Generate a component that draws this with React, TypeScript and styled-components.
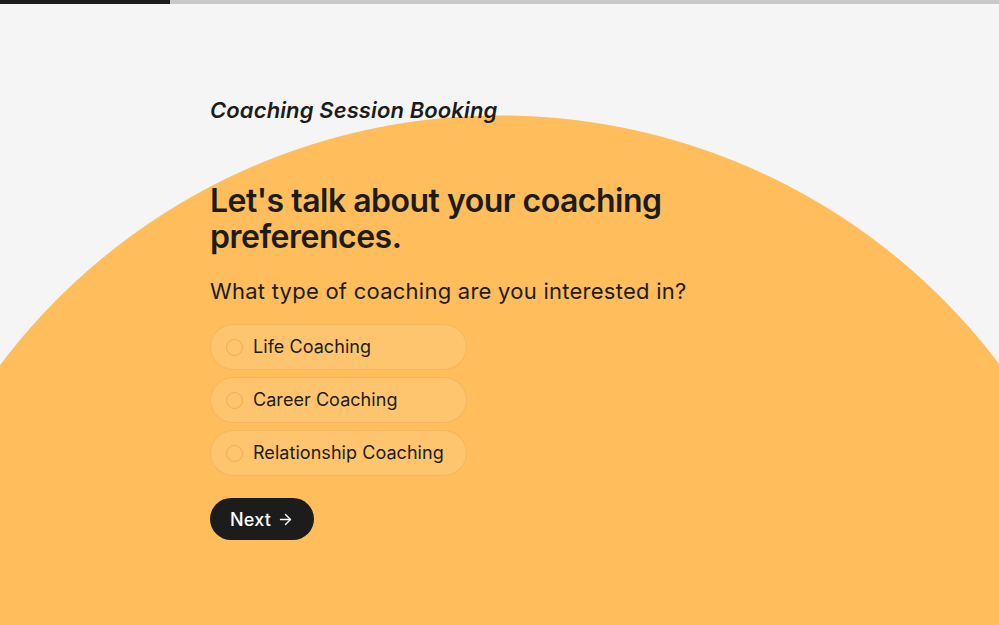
import React, { useState } from 'react';
import styled, { createGlobalStyle } from 'styled-components';

const GlobalStyle = createGlobalStyle`
  html, body {
    margin: 0;
    padding: 0;
  }
  body {
    font-family: Inter, "Noto Sans", sans-serif;
    color: #1c1c1c;
    -webkit-font-smoothing: antialiased;
  }
  * {
    box-sizing: border-box;
  }
`;

const Page = styled.div`
  min-height: 625px;
  height: 100vh;
  overflow: hidden;
  background: radial-gradient(
    circle 626px at 500px 741px,
    #ffbd5b 625px,
    #f5f5f5 626px
  );
`;

const Progress = styled.div`
  height: 4px;
  background: #c8c8c8;
`;

const ProgressFill = styled.div<{ $pct: number }>`
  height: 100%;
  width: ${(p) => p.$pct}%;
  background: #1c1c1c;
`;

const Content = styled.main`
  display: flex;
  flex-direction: column;
  align-items: flex-start;
  padding: 92px 0 0 210px;
`;

const FormTitle = styled.div`
  font-size: 22px;
  font-style: italic;
  font-weight: 600;
  line-height: 28px;
  letter-spacing: 0.12px;
  margin-bottom: 59px;
`;

const Heading = styled.h1`
  margin: 0 0 22px;
  max-width: 480px;
  font-size: 32px;
  font-weight: 600;
  line-height: 36px;
  letter-spacing: -0.5px;
`;

const Question = styled.p`
  margin: 0 0 19px;
  font-size: 22px;
  font-weight: 400;
  line-height: 28px;
  letter-spacing: 0.25px;
`;

const Options = styled.div`
  display: flex;
  flex-direction: column;
  gap: 7px;
  margin-bottom: 22px;
`;

const Option = styled.label<{ $active: boolean }>`
  display: flex;
  align-items: center;
  gap: 10px;
  width: 257px;
  height: 46px;
  padding: 0 15px;
  border-radius: 23px;
  border: 1px solid rgba(200, 130, 20, 0.22);
  background: ${(p) => (p.$active ? '#ffd08a' : 'rgba(255, 255, 255, 0.12)')};
  font-size: 18px;
  line-height: 24px;
  letter-spacing: 0.05px;
  cursor: pointer;
`;

const Radio = styled.span<{ $active: boolean }>`
  width: 17px;
  height: 17px;
  border-radius: 50%;
  border: 1px solid rgba(180, 120, 20, 0.28);
  background: ${(p) => (p.$active ? '#1c1c1c' : 'transparent')};
  flex-shrink: 0;
`;

const NextButton = styled.button`
  display: flex;
  align-items: center;
  gap: 6px;
  height: 42px;
  padding: 0 20px;
  border: none;
  border-radius: 21px;
  background: #1c1c1c;
  color: #fff;
  font-family: Inter, "Noto Sans", sans-serif;
  font-size: 18px;
  font-weight: 500;
  letter-spacing: 0.2px;
  cursor: pointer;
`;

const options = ['Life Coaching', 'Career Coaching', 'Relationship Coaching'];

export default function App() {
  const [selected, setSelected] = useState<string | null>(null);

  return (
    <Page>
      <GlobalStyle />
      <Progress>
        <ProgressFill $pct={17} />
      </Progress>
      <Content>
        <FormTitle>Coaching Session Booking</FormTitle>
        <Heading>Let's talk about your coaching preferences.</Heading>
        <Question>What type of coaching are you interested in?</Question>
        <Options>
          {options.map((o) => (
            <Option key={o} $active={selected === o} onClick={() => setSelected(o)}>
              <Radio $active={selected === o} />
              {o}
            </Option>
          ))}
        </Options>
        <NextButton>
          Next
          <svg width="17" height="17" viewBox="0 0 24 24" fill="none" stroke="currentColor" strokeWidth="2" strokeLinecap="round" strokeLinejoin="round">
            <path d="M5 12h14" />
            <path d="m12 5 7 7-7 7" />
          </svg>
        </NextButton>
      </Content>
    </Page>
  );
}
